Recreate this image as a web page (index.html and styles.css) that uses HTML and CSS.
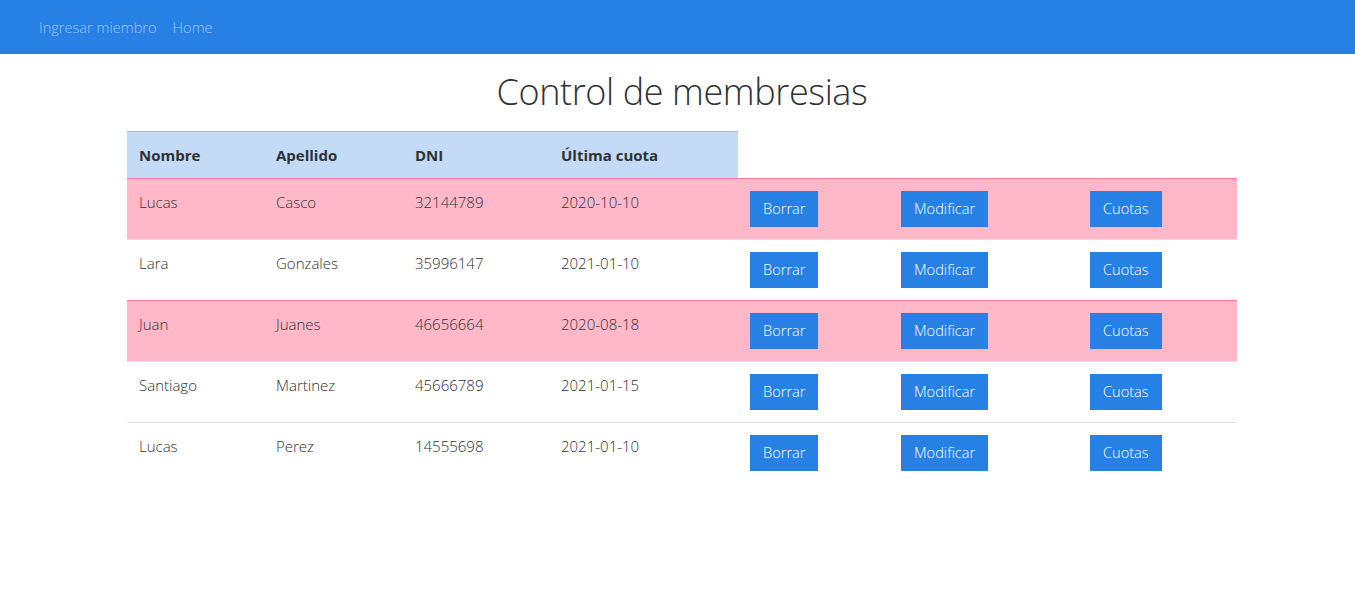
FILE: index.html
```html
<!DOCTYPE html>
<html lang="es">
<head>
<meta charset="utf-8">
<title>Control de membresias</title>
<link rel="stylesheet" href="styles.css">
</head>
<body>
<nav class="navbar">
  <a class="nav-link" href="#">Ingresar miembro</a>
  <a class="nav-link" href="#">Home</a>
</nav>
<main class="container">
  <h1 class="title">Control de membresias</h1>
  <table class="members">
    <colgroup>
      <col class="c1"><col class="c2"><col class="c3"><col class="c4"><col class="c5"><col class="c6"><col class="c7">
    </colgroup>
    <thead>
      <tr>
        <th class="head">Nombre</th>
        <th class="head">Apellido</th>
        <th class="head">DNI</th>
        <th class="head">Última cuota</th>
        <th class="blank"></th><th class="blank"></th><th class="blank"></th>
      </tr>
    </thead>
    <tbody>
      <tr class="late">
        <td>Lucas</td><td>Casco</td><td>32144789</td><td>2020-10-10</td>
        <td><button class="btn">Borrar</button></td>
        <td><button class="btn">Modificar</button></td>
        <td><button class="btn">Cuotas</button></td>
      </tr>
      <tr>
        <td>Lara</td><td>Gonzales</td><td>35996147</td><td>2021-01-10</td>
        <td><button class="btn">Borrar</button></td>
        <td><button class="btn">Modificar</button></td>
        <td><button class="btn">Cuotas</button></td>
      </tr>
      <tr class="late">
        <td>Juan</td><td>Juanes</td><td>46656664</td><td>2020-08-18</td>
        <td><button class="btn">Borrar</button></td>
        <td><button class="btn">Modificar</button></td>
        <td><button class="btn">Cuotas</button></td>
      </tr>
      <tr>
        <td>Santiago</td><td>Martinez</td><td>45666789</td><td>2021-01-15</td>
        <td><button class="btn">Borrar</button></td>
        <td><button class="btn">Modificar</button></td>
        <td><button class="btn">Cuotas</button></td>
      </tr>
      <tr>
        <td>Lucas</td><td>Perez</td><td>14555698</td><td>2021-01-10</td>
        <td><button class="btn">Borrar</button></td>
        <td><button class="btn">Modificar</button></td>
        <td><button class="btn">Cuotas</button></td>
      </tr>
    </tbody>
  </table>
</main>
</body>
</html>
```

FILE: styles.css
```css
* { box-sizing: border-box; }
html, body { margin: 0; padding: 0; }
body {
  font-family: "Open Sans", "Noto Sans", sans-serif;
  font-weight: 300;
  font-size: 15px;
  line-height: 1.5;
  color: #2f3234;
  background: #fff;
}
.navbar {
  background: #2780e3;
  height: 54px;
  display: flex;
  align-items: center;
  padding-left: 31px;
  padding-top: 1px;
}
.nav-link {
  color: rgba(255, 255, 255, 0.55);
  text-decoration: none;
  padding: 8px;
  font-size: 14.6px;
}
.container {
  width: 1110px;
  margin-left: 127px;
}
.title {
  font-weight: 300;
  font-size: 36px;
  letter-spacing: -0.4px;
  line-height: 1.2;
  text-align: center;
  margin: 16px 0 18px;
  color: #2f3234;
}
.members {
  width: 1110px;
  table-layout: fixed;
  border-collapse: collapse;
}
.c1 { width: 137px; }
.c2 { width: 139px; }
.c3 { width: 146px; }
.c4 { width: 189px; }
.c5 { width: 151px; }
.c6 { width: 189px; }
.c7 { width: 159px; }
.members th, .members td {
  padding: 12px;
  text-align: left;
  vertical-align: top;
}
.members th {
  line-height: 22px;
}
.members th.head {
  background: #c3dbf7;
  border-top: 1px solid #8fbdf0;
  font-weight: 700;
}
.members tbody td { border-top: 1px solid #dee2e6; }
.members tr.late td { background: #ffb8c8; border-top-color: #ff7a98; }
.btn {
  font-family: inherit;
  font-weight: 300;
  font-size: 14.6px;
  line-height: 1.5;
  color: #fff;
  background: #2780e3;
  border: 1px solid #2780e3;
  border-radius: 0;
  padding: 6px 12px;
  height: 36px;
  cursor: pointer;
}
```
